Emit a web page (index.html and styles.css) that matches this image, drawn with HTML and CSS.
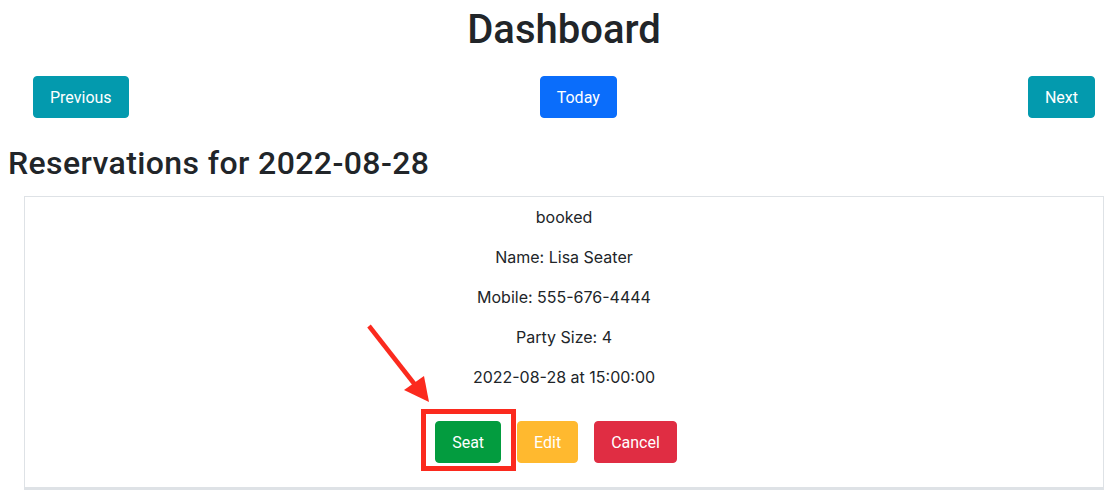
FILE: index.html
```html
<!DOCTYPE html>
<html lang="en">
<head>
<meta charset="utf-8">
<title>Dashboard</title>
<link rel="stylesheet" href="styles.css">
</head>
<body>
<main class="page">
  <section class="top">
    <h1 class="title">Dashboard</h1>
    <div class="date-nav">
      <button class="btn btn-info">Previous</button>
      <button class="btn btn-primary">Today</button>
      <button class="btn btn-info">Next</button>
    </div>
  </section>
  <h2 class="subtitle">Reservations for 2022-08-28</h2>
  <div class="card">
    <p class="line">booked</p>
    <p class="line">Name: Lisa Seater</p>
    <p class="line">Mobile: 555-676-4444</p>
    <p class="line">Party Size: 4</p>
    <p class="line">2022-08-28 at 15:00:00</p>
    <div class="actions">
      <button class="btn btn-success">Seat</button>
      <button class="btn btn-warning">Edit</button>
      <button class="btn btn-danger">Cancel</button>
    </div>
    <div class="highlight"></div>
    <svg class="arrow" width="80" height="95" viewBox="0 0 80 95" aria-hidden="true">
      <line x1="8" y1="10" x2="55" y2="70" stroke="#fb2a1e" stroke-width="4.5" stroke-linecap="butt"/>
      <polygon points="68,86 43,74 63,60" fill="#fb2a1e"/>
    </svg>
  </div>
</main>
</body>
</html>
```
FILE: styles.css
```css
* { box-sizing: border-box; }
html, body { margin: 0; padding: 0; background: #fff; }
body {
  font-family: Roboto, "Liberation Sans", Arial, sans-serif;
  font-size: 16px;
  line-height: 1.5;
  color: #212529;
}
.page { padding: 0 8px; }
.top { margin: 0 13px 0 25px; }
.title {
  margin: 6px 0 0;
  font-size: 40px;
  line-height: 48px;
  font-weight: 500;
  text-align: center;
}
.date-nav {
  display: flex;
  justify-content: space-between;
  margin-top: 22px;
}
.btn {
  font-family: Roboto, "Liberation Sans", Arial, sans-serif;
  font-size: 16px;
  line-height: 24px;
  padding: 9px 16px 7px;
  border: 1px solid transparent;
  border-radius: 4px;
  color: #fff;
  cursor: pointer;
}
.btn-info { background: #039aae; border-color: #039aae; }
.btn-primary { background: #0a6dfb; border-color: #0a6dfb; }
.btn-success { background: #039c3f; border-color: #039c3f; }
.btn-warning { background: #ffb92f; border-color: #ffb92f; }
.btn-danger { background: #e02d43; border-color: #e02d43; }
.subtitle {
  margin: 26px 0 0;
  font-size: 32px;
  line-height: 38px;
  font-weight: 500;
  letter-spacing: 0.4px;
}
.card {
  position: relative;
  margin: 14px 4px 0 16px;
  border: 1px solid #dee2e6;
  border-bottom: 3px solid #dee2e6;
  padding: 8px 0 24px;
  text-align: center;
  font-family: Inter, Roboto, "Liberation Sans", Arial, sans-serif;
}
.line { margin: 0 0 16px; }
.actions {
  display: flex;
  justify-content: center;
  padding-top: 16px;
}
.actions .btn { margin-right: 16px; }
.highlight {
  position: absolute;
  left: 396px;
  top: 212px;
  width: 95px;
  height: 62px;
  border: 5px solid #fb2a1e;
}
.arrow {
  position: absolute;
  left: 336px;
  top: 119px;
}
```
